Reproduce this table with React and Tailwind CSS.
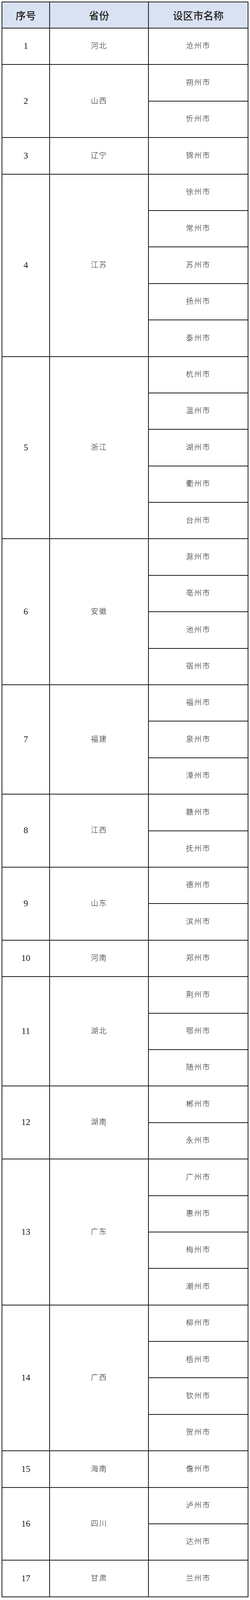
const data = [
  ["1", "河北", ["沧州市"]],
  ["2", "山西", ["朔州市", "忻州市"]],
  ["3", "辽宁", ["锦州市"]],
  ["4", "江苏", ["徐州市", "常州市", "苏州市", "扬州市", "泰州市"]],
  ["5", "浙江", ["杭州市", "温州市", "湖州市", "衢州市", "台州市"]],
  ["6", "安徽", ["滁州市", "亳州市", "池州市", "宿州市"]],
  ["7", "福建", ["福州市", "泉州市", "漳州市"]],
  ["8", "江西", ["赣州市", "抚州市"]],
  ["9", "山东", ["德州市", "滨州市"]],
  ["10", "河南", ["郑州市"]],
  ["11", "湖北", ["荆州市", "鄂州市", "随州市"]],
  ["12", "湖南", ["郴州市", "永州市"]],
  ["13", "广东", ["广州市", "惠州市", "梅州市", "潮州市"]],
  ["14", "广西", ["柳州市", "梧州市", "钦州市", "贺州市"]],
  ["15", "海南", ["儋州市"]],
  ["16", "四川", ["泸州市", "达州市"]],
  ["17", "甘肃", ["兰州市"]],
]

const cell = "border-r-2 border-b-2 border-[#1a1a1a] flex items-center justify-center"
const body = "text-[19px] font-light tracking-[2px] text-[#222]"

export default function App() {
  return (
    <div className="bg-white min-h-screen pt-[4px] pl-[4px]" style={{ fontFamily: '"Liberation Serif", "Noto Sans CJK SC", serif' }}>
      <div className="w-[632px] border-l-2 border-t-2 border-[#1a1a1a]">
        {/* header */}
        <div
          className="flex h-[67px] bg-[#d9e2f3] text-[26px] font-medium text-[#222]"
          style={{ fontFamily: '"Noto Sans CJK SC", sans-serif' }}
        >
          <div className={`${cell} w-[122px]`}>序号</div>
          <div className={`${cell} w-[253px]`}>省份</div>
          <div className={`${cell} flex-1`}>设区市名称</div>
        </div>

        {data.map(([no, prov, cities]) => (
          <div key={no} className="flex">
            <div className={`${cell} w-[122px] text-[23px] text-[#222]`}>{no}</div>
            <div className={`${cell} w-[253px] ${body}`}>{prov}</div>
            <div className="flex-1 flex flex-col">
              {cities.map((city) => (
                <div key={city} className={`${cell} ${body} h-[93.4px]`}>
                  {city}
                </div>
              ))}
            </div>
          </div>
        ))}
      </div>
    </div>
  )
}
